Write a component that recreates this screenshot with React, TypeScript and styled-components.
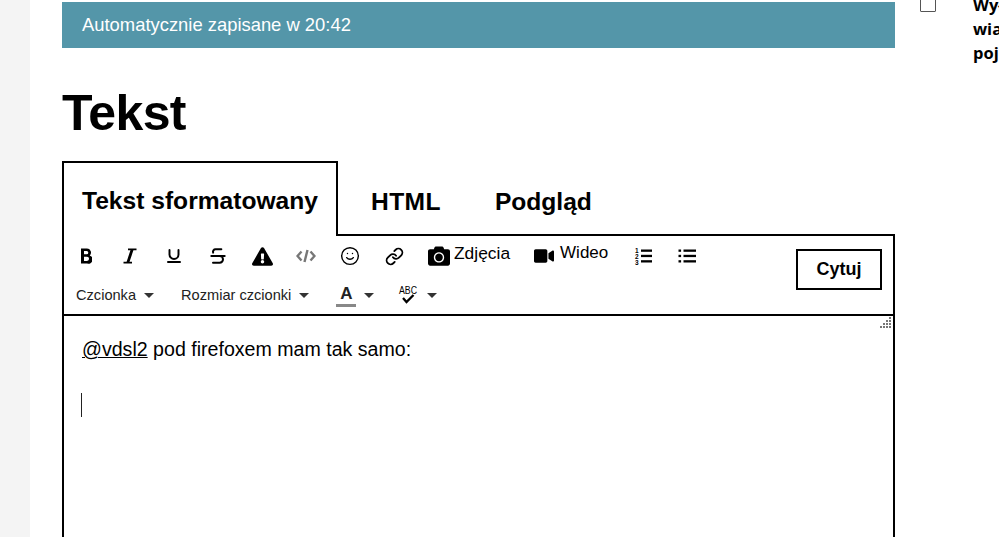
import React from 'react'
import styled, { createGlobalStyle } from 'styled-components'
import { FaCamera, FaExclamationTriangle, FaVideo } from 'react-icons/fa'
import { Link, Smile, Strikethrough, Underline } from 'lucide-react'

const GlobalStyle = createGlobalStyle`
  html, body {
    margin: 0;
    padding: 0;
    height: 100%;
    overflow: hidden;
    background: #fff;
    font-family: 'Liberation Sans', Arial, sans-serif;
    color: #000;
  }
`

const BoldIcon = () => (
  <svg width="12" height="16" viewBox="0 0 12 16" fill="#000" fillRule="evenodd">
    <path d="M1 .5h5.800a4 4 0 0 1 2.900 6.900 4.200 4.200 0 0 1-2.400 8.100H1zM4 3.100v3.200h2.700a1.600 1.600 0 0 0 0-3.200zM4 8.800v4.100h3a2.050 2.050 0 0 0 0-4.100z" />
  </svg>
)

const ItalicIcon = () => (
  <svg width="14" height="16" viewBox="0 0 14 16" fill="none" stroke="#000">
    <path strokeWidth="1.800" d="M5 1.400h8.500M.5 14.600H9" />
    <path strokeWidth="2.800" d="M9.200 1.400 4.800 14.600" />
  </svg>
)

const OrderedListIcon = () => (
  <svg width="18" height="18" viewBox="0 0 18 18" fill="#000">
    <rect x="7" y="2.500" width="11" height="2.300" />
    <rect x="7" y="7.800" width="11" height="2.300" />
    <rect x="7" y="13.200" width="11" height="2.300" />
    <text x="1" y="6" fontFamily="'Liberation Sans'" fontSize="6.500" fontWeight="700">1</text>
    <text x="1" y="11.500" fontFamily="'Liberation Sans'" fontSize="6.500" fontWeight="700">2</text>
    <text x="1" y="17.500" fontFamily="'Liberation Sans'" fontSize="6.500" fontWeight="700">3</text>
  </svg>
)

const BulletListIcon = () => (
  <svg width="18" height="18" viewBox="0 0 18 18" fill="#000">
    <rect x="0.500" y="2.500" width="2.600" height="2.300" />
    <rect x="0.500" y="7.800" width="2.600" height="2.300" />
    <rect x="0.500" y="13.200" width="2.600" height="2.300" />
    <rect x="5.500" y="2.500" width="12.500" height="2.300" />
    <rect x="5.500" y="7.800" width="12.500" height="2.300" />
    <rect x="5.500" y="13.200" width="12.500" height="2.300" />
  </svg>
)

const SpellIcon = () => (
  <svg width="20" height="20" viewBox="0 0 20 20" fill="none" stroke="#000" overflow="visible">
    <text
      x="0"
      y="9"
      fontFamily="'Liberation Sans'"
      fontSize="10.500"
      stroke="none"
      fill="#000"
      textLength="18"
      lengthAdjust="spacingAndGlyphs"
    >
      ABC
    </text>
    <path strokeWidth="2.300" d="m4 13 3.500 4 7-7" />
  </svg>
)

function App() {
  return (
    <>
      <GlobalStyle />
      <Page>
        <Gutter />
        <Main>
          <Banner>Automatycznie zapisane w 20:42</Banner>
          <Title>Tekst</Title>
          <Tabs>
            <Tab $active>Tekst sformatowany</Tab>
            <Tab $first>HTML</Tab>
            <Tab>Podgląd</Tab>
          </Tabs>
          <Editor>
            <Toolbar>
              <ToolGroups>
                <ToolRow>
                  <IconButton><BoldIcon /></IconButton>
                  <IconButton><ItalicIcon /></IconButton>
                  <IconButton><Underline size={18} strokeWidth={2.6} /></IconButton>
                  <IconButton><Strikethrough size={20} strokeWidth={2.4} /></IconButton>
                  <IconButton><FaExclamationTriangle size={21} /></IconButton>
                  <IconButton $muted>
                    <svg width="20" height="14" viewBox="0 0 20 14" fill="none" stroke="currentColor" strokeWidth="2.400">
                      <path d="M5.500 2.500 1.500 7l4 4.500M14.500 2.500l4 4.500-4 4.500M11.500 1l-3 12" />
                    </svg>
                  </IconButton>
                  <IconButton><Smile size={20} strokeWidth={1.7} /></IconButton>
                  <IconButton><Link size={19} strokeWidth={2.3} /></IconButton>
                  <TextButton $size={17.4} $gap={4} $left={12} $right={9}>
                    <FaCamera size={22} />
                    <span>Zdjęcia</span>
                  </TextButton>
                  <TextButton $size={17} $gap={6} $left={15} $right={13}>
                    <FaVideo size={20} />
                    <span>Wideo</span>
                  </TextButton>
                  <IconButton><OrderedListIcon /></IconButton>
                  <IconButton><BulletListIcon /></IconButton>
                </ToolRow>
                <SelectRow>
                  <Select $gap={27}>Czcionka<Caret /></Select>
                  <Select $gap={25}>Rozmiar czcionki<Caret /></Select>
                  <Select $gap={25}>
                    <ColorLetter>A</ColorLetter>
                    <Caret />
                  </Select>
                  <Select $gap={0}>
                    <SpellIcon />
                    <Caret />
                  </Select>
                </SelectRow>
              </ToolGroups>
              <QuoteButton>Cytuj</QuoteButton>
            </Toolbar>
            <Content>
              <Grip>
                <svg width="12" height="12" viewBox="0 0 12 12" fill="#777">
                  {[
                    [9, 0], [6, 3], [9, 3], [3, 6], [6, 6], [9, 6], [0, 9], [3, 9], [6, 9], [9, 9],
                  ].map(([x, y]) => (
                    <rect key={`${x}-${y}`} x={x} y={y} width="2" height="2" />
                  ))}
                </svg>
              </Grip>
              <Paragraph>
                <Mention>@vdsl2</Mention> pod firefoxem mam tak samo:
              </Paragraph>
              <Cursor />
            </Content>
          </Editor>
        </Main>
        <Aside>
          <Checkbox />
          <AsideText>
            Wyłącz
            <br />
            wiadomości
            <br />
            pojedyncze
          </AsideText>
        </Aside>
      </Page>
    </>
  )
}

export default App

const Page = styled.div`
  display: flex;
  width: 999px;
  height: 537px;
  overflow: hidden;
`

const Gutter = styled.div`
  flex: 0 0 30px;
  background: #f4f4f4;
`

const Main = styled.main`
  flex: 0 0 833px;
  margin-left: 32px;
  padding-top: 2px;
`

const Banner = styled.div`
  height: 46px;
  padding-left: 20px;
  line-height: 46px;
  font-size: 18.4px;
  color: #fff;
  background: #5496a9;
`

const Title = styled.h1`
  margin: 0;
  padding-top: 36px;
  height: 77px;
  font-size: 50px;
  line-height: 58px;
  font-weight: 700;
  letter-spacing: -0.6px;
`

const Tabs = styled.div`
  display: flex;
  align-items: flex-end;
  margin-bottom: -2px;
  position: relative;
  z-index: 1;
`

const Tab = styled.div<{ $active?: boolean; $first?: boolean }>`
  box-sizing: border-box;
  height: 75px;
  padding: 0 ${({ $active }) => ($active ? '18px' : '27px')};
  margin-left: ${({ $first }) => ($first ? '6px' : '0')};
  line-height: ${({ $active }) => ($active ? '76px' : '81px')};
  font-size: 24.6px;
  font-weight: 700;
  letter-spacing: ${({ $first }) => ($first ? '0.4px' : '0')};
  ${({ $active }) => ($active ? 'background: #fff; border: 2px solid #000; border-bottom: 0;' : '')}
`

const Editor = styled.div`
  border: 2px solid #000;
  height: 320px;
  box-sizing: border-box;
`

const Toolbar = styled.div`
  display: flex;
  justify-content: space-between;
  height: 78px;
  border-bottom: 2px solid #000;
`

const ToolGroups = styled.div`
  display: flex;
  flex-direction: column;
`

const ToolRow = styled.div`
  display: flex;
  align-items: center;
  height: 40px;
`

const IconButton = styled.div<{ $muted?: boolean }>`
  display: flex;
  justify-content: center;
  align-items: center;
  width: 44px;
  color: ${({ $muted }) => ($muted ? '#777' : '#000')};
`

const TextButton = styled.div<{ $size: number; $gap: number; $left: number; $right: number }>`
  display: flex;
  align-items: center;
  gap: ${({ $gap }) => $gap}px;
  margin: 0 ${({ $right }) => $right}px 0 ${({ $left }) => $left}px;
  font-size: ${({ $size }) => $size}px;

  span {
    position: relative;
    top: -3px;
  }
`

const SelectRow = styled.div`
  display: flex;
  align-items: center;
  height: 38px;
  padding-left: 12px;
  font-size: 14.6px;
  color: #222;
`

const Select = styled.div<{ $gap: number }>`
  display: flex;
  align-items: center;
  margin-right: ${({ $gap }) => $gap}px;
`

const Caret = styled.span`
  margin-left: 8px;
  border-top: 5px solid #333;
  border-left: 5px solid transparent;
  border-right: 5px solid transparent;
`

const ColorLetter = styled.span`
  width: 20px;
  margin-left: 2px;
  font-size: 17px;
  font-weight: 700;
  line-height: 20px;
  text-align: center;
  border-bottom: 3px solid #888;
`

const QuoteButton = styled.button`
  box-sizing: border-box;
  align-self: flex-start;
  width: 86px;
  height: 41px;
  margin: 13px 11px 0 0;
  padding: 0;
  border: 2px solid #000;
  background: #fff;
  font-family: inherit;
  font-size: 18px;
  font-weight: 700;
  color: #000;
`

const Content = styled.div`
  position: relative;
  padding: 21px 18px;
`

const Grip = styled.div`
  position: absolute;
  top: 1px;
  right: 1px;
  line-height: 0;
`

const Paragraph = styled.p`
  margin: 0;
  font-size: 19.6px;
  line-height: 24px;
`

const Mention = styled.span`
  text-decoration: underline;
`

const Cursor = styled.div`
  width: 1px;
  height: 24px;
  margin: 32px 0 0 -1px;
  background: #222;
`

const Aside = styled.aside`
  display: flex;
  flex: 1;
  margin-top: -7px;
  margin-left: 25px;
  min-width: 0;
`

const Checkbox = styled.div`
  flex: 0 0 auto;
  box-sizing: border-box;
  width: 16px;
  height: 19px;
  border: 1px solid #555;
  border-radius: 1px;
`

const AsideText = styled.div`
  margin-left: 37px;
  font-family: 'Open Sans', sans-serif;
  font-size: 16.5px;
  font-weight: 700;
  line-height: 24px;
  white-space: nowrap;
`
